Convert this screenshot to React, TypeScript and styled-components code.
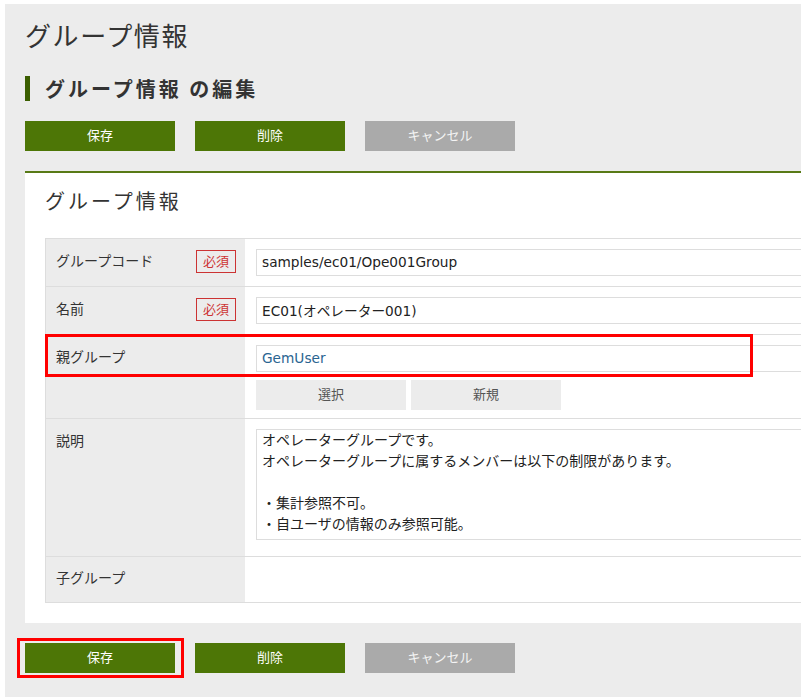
import React from "react";
import styled, { createGlobalStyle } from "styled-components";

const GlobalStyle = createGlobalStyle`
  html, body {
    margin: 0;
    padding: 0;
    background: #ffffff;
  }
  body {
    font-family: "Noto Sans CJK JP", "DejaVu Sans", sans-serif;
    color: #333333;
  }
`;

const JP = `"Noto Sans CJK JP", "DejaVu Sans", sans-serif`;
const MIXED = `"DejaVu Sans", "Noto Sans CJK JP", sans-serif`;

const Page = styled.div`
  margin: 4px 0 3px 5px;
  background: #ececec;
  padding: 12px 0 24px 20px;
  overflow: hidden;
`;

const Title = styled.h1`
  margin: 0;
  font-family: ${JP};
  font-size: 26px;
  line-height: 38px;
  font-weight: normal;
  letter-spacing: 1.6px;
  color: #333333;
`;

const SubHeading = styled.h2`
  margin: 22px 0 0;
  border-left: 5px solid #3b5e00;
  padding-left: 15px;
  height: 25px;
  line-height: 25px;
  font-family: ${JP};
  font-size: 20px;
  font-weight: bold;
  letter-spacing: 3px;
  color: #333333;
`;

const ButtonRow = styled.div`
  display: flex;
  gap: 20px;
  margin-top: 20px;
`;

const ActionButton = styled.button<{ $variant: "primary" | "muted" }>`
  position: relative;
  width: 150px;
  height: 30px;
  border: none;
  padding: 0 0 4px;
  background: ${(p) => (p.$variant === "primary" ? "#4d7606" : "#aaaaaa")};
  color: ${(p) => (p.$variant === "primary" ? "#ffffff" : "#f4f4f4")};
  font-family: ${JP};
  font-size: 13px;
  cursor: pointer;
`;

const Highlight = styled.span<{ $top: number; $left: number; $w: number; $h: number }>`
  position: absolute;
  top: ${(p) => p.$top}px;
  left: ${(p) => p.$left}px;
  width: ${(p) => p.$w}px;
  height: ${(p) => p.$h}px;
  border: 3px solid #ff0000;
  box-sizing: border-box;
  pointer-events: none;
`;

const Panel = styled.section`
  width: 860px;
  margin-top: 20px;
  border-top: 2px solid #587a16;
  background: #ffffff;
  padding: 0 0 20px 20px;
`;

const PanelTitle = styled.h3`
  margin: 13px 0 0;
  font-family: ${JP};
  font-size: 20px;
  line-height: 30px;
  font-weight: normal;
  letter-spacing: 3px;
  color: #333333;
`;

const FormTable = styled.div`
  margin-top: 22px;
  border-top: 1px solid #dddddd;
`;

const Row = styled.div`
  position: relative;
  display: grid;
  grid-template-columns: 200px 1fr;
  border-bottom: 1px solid #dddddd;
`;

const LabelCell = styled.div<{ $top?: number; $bottom?: number }>`
  display: flex;
  justify-content: space-between;
  align-items: flex-start;
  border-left: 1px solid #dddddd;
  background: #ececec;
  padding: ${(p) => p.$top ?? 8}px 9px ${(p) => p.$bottom ?? 12}px 10px;
  font-family: ${JP};
  font-size: 14px;
  line-height: 27px;
  color: #333333;
`;

const Required = styled.span`
  display: inline-flex;
  align-items: center;
  justify-content: center;
  box-sizing: border-box;
  width: 40px;
  height: 23px;
  margin-top: 3px;
  padding-bottom: 2px;
  border: 1px solid #cc3333;
  color: #cc3333;
  font-size: 13px;
  line-height: 1;
`;

const ValueCell = styled.div<{ $bottom?: number }>`
  padding: 10px 0 ${(p) => p.$bottom ?? 10}px 11px;
  background: #ffffff;
`;

const TextField = styled.input<{ $link?: boolean }>`
  display: block;
  box-sizing: border-box;
  width: 100%;
  height: 27px;
  margin: 0;
  border: 1px solid #dddddd;
  padding: 0 5px 1px;
  background: #ffffff;
  font-family: ${MIXED};
  font-size: 13.7px;
  color: ${(p) => (p.$link ? "#2a6591" : "#222222")};
  outline: none;
`;

const SmallButtons = styled.div`
  display: flex;
  gap: 5px;
  margin-top: 8px;
`;

const SmallButton = styled.button`
  width: 150px;
  height: 30px;
  border: none;
  padding: 0 0 4px;
  background: #ececec;
  color: #555555;
  font-family: ${JP};
  font-size: 13px;
`;

const TextArea = styled.textarea`
  display: block;
  box-sizing: border-box;
  width: 100%;
  height: 111px;
  margin: 0 0 6px;
  border: 1px solid #dddddd;
  padding: 0 5px 2px;
  resize: none;
  overflow: hidden;
  font-family: ${MIXED};
  font-size: 14px;
  line-height: 21px;
  color: #222222;
  outline: none;
`;

const description =
  "オペレーターグループです。\nオペレーターグループに属するメンバーは以下の制限があります。\n\n・集計参照不可。\n・自ユーザの情報のみ参照可能。";

export default function App() {
  return (
    <>
      <GlobalStyle />
      <Page>
        <Title>グループ情報</Title>
        <SubHeading>グループ情報 の編集</SubHeading>
        <ButtonRow>
          <ActionButton $variant="primary">保存</ActionButton>
          <ActionButton $variant="primary">削除</ActionButton>
          <ActionButton $variant="muted">キャンセル</ActionButton>
        </ButtonRow>

        <Panel>
          <PanelTitle>グループ情報</PanelTitle>
          <FormTable>
            <Row>
              <LabelCell>
                <span>グループコード</span>
                <Required>必須</Required>
              </LabelCell>
              <ValueCell>
                <TextField readOnly defaultValue="samples/ec01/Ope001Group" />
              </ValueCell>
            </Row>
            <Row>
              <LabelCell>
                <span>名前</span>
                <Required>必須</Required>
              </LabelCell>
              <ValueCell>
                <TextField readOnly defaultValue="EC01(オペレーター001)" />
              </ValueCell>
            </Row>
            <Row>
              <LabelCell>
                <span>親グループ</span>
              </LabelCell>
              <ValueCell $bottom={8}>
                <TextField $link readOnly defaultValue="GemUser" />
                <SmallButtons>
                  <SmallButton>選択</SmallButton>
                  <SmallButton>新規</SmallButton>
                </SmallButtons>
              </ValueCell>
              <Highlight $top={-1} $left={0} $w={708} $h={43} />
            </Row>
            <Row>
              <LabelCell>
                <span>説明</span>
              </LabelCell>
              <ValueCell>
                <TextArea readOnly defaultValue={description} />
              </ValueCell>
            </Row>
            <Row>
              <LabelCell $top={7} $bottom={11}>
                <span>子グループ</span>
              </LabelCell>
              <ValueCell />
            </Row>
          </FormTable>
        </Panel>

        <ButtonRow>
          <ActionButton $variant="primary">
            保存
            <Highlight $top={-5} $left={-8} $w={167} $h={40} />
          </ActionButton>
          <ActionButton $variant="primary">削除</ActionButton>
          <ActionButton $variant="muted">キャンセル</ActionButton>
        </ButtonRow>
      </Page>
    </>
  );
}
